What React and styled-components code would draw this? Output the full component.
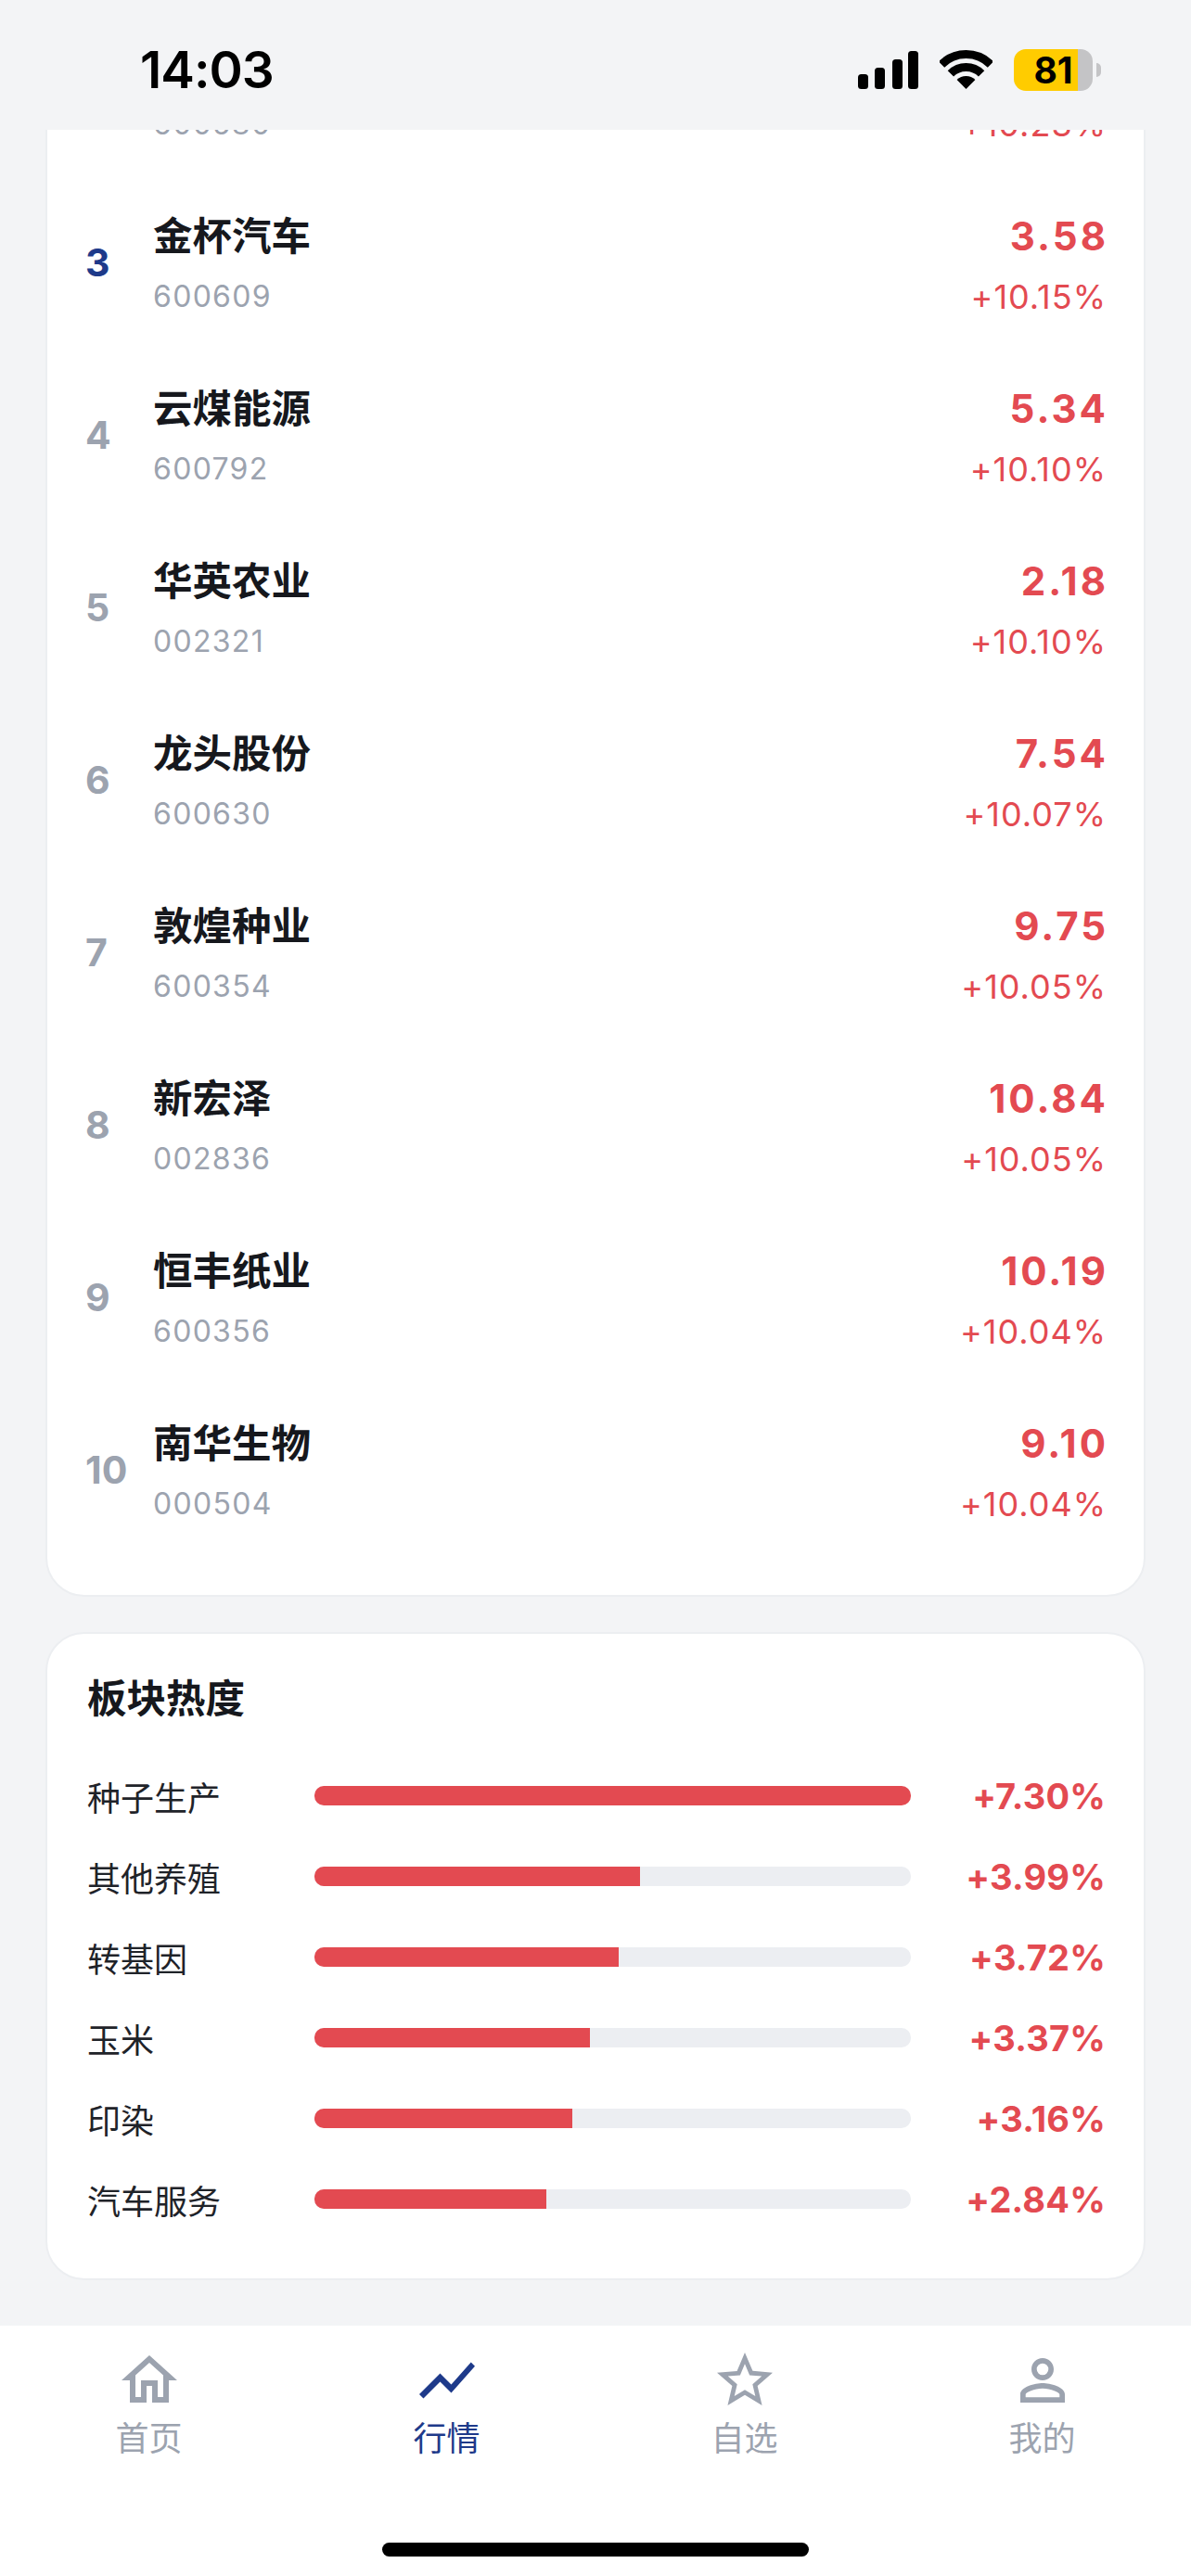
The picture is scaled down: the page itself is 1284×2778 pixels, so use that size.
import React from 'react';
import styled, { createGlobalStyle } from 'styled-components';
import { MdOutlineHome, MdShowChart, MdStarBorder, MdPersonOutline } from 'react-icons/md';

const GlobalStyle = createGlobalStyle`
  html, body {
    margin: 0;
    padding: 0;
    background: #f3f4f6;
  }
  * {
    box-sizing: border-box;
  }
`;

const Screen = styled.div`
  width: 1284px;
  height: 2778px;
  display: flex;
  flex-direction: column;
  overflow: hidden;
  background: #f3f4f6;
  font-family: Inter, "Noto Sans CJK SC", sans-serif;
`;

const StatusBar = styled.div`
  height: 140px;
  flex: none;
  display: flex;
  align-items: center;
  justify-content: space-between;
  padding: 10px 97px 0 151px;
`;

const Clock = styled.div`
  font-size: 55px;
  line-height: 66px;
  font-weight: 600;
  letter-spacing: -1px;
  color: #000;
`;

const StatusIcons = styled.div`
  display: flex;
  align-items: center;
  gap: 23px;
`;

const Battery = styled.div`
  display: flex;
  align-items: center;
  gap: 4px;
`;

const BatteryBody = styled.div`
  width: 85px;
  height: 45px;
  border-radius: 13px;
  background: linear-gradient(to right, #ffcc00 81%, #c4c4c6 81%);
  text-align: center;
  font-size: 39px;
  line-height: 45px;
  font-weight: 700;
  color: #000;
`;

const BatteryNub = styled.div`
  width: 5px;
  height: 15px;
  border-radius: 0 8px 8px 0;
  background: #c4c4c6;
`;

const Scroller = styled.div`
  flex: 1;
  min-height: 0;
  overflow: hidden;
  padding: 0 49px;
`;

const Card = styled.section`
  background: #fff;
  border: 2px solid #eceef1;
  border-radius: 42px;
`;

// the list is scrolled, so its top edge sits above the visible area
const StockCard = styled(Card)`
  margin-top: -138px;
  padding: 0 0 42px;
`;

const StockRow = styled.div`
  height: 186px;
  display: flex;
  align-items: center;
  padding: 0 41px;
`;

const Rank = styled.div`
  width: 73px;
  flex: none;
  font-size: 41px;
  font-weight: 700;
  color: ${(p) => (p.$top ? '#1e3a8a' : '#9ca3af')};
`;

const StockName = styled.div`
  flex: 1;
  display: flex;
  flex-direction: column;
  gap: 20px;
  padding-top: 3px;
`;

const NameText = styled.div`
  font-size: 42.5px;
  line-height: 50px;
  font-weight: 600;
  color: #16181d;
`;

const CodeText = styled.div`
  font-size: 32px;
  line-height: 40px;
  letter-spacing: 1.3px;
  color: #9ca3af;
`;

const StockPrice = styled.div`
  display: flex;
  flex-direction: column;
  align-items: flex-end;
  gap: 20px;
  padding-top: 3px;
`;

const PriceText = styled.div`
  margin-right: -3px;
  font-size: 42px;
  line-height: 50px;
  font-weight: 700;
  letter-spacing: 3px;
  color: #e34a51;
`;

const ChangeText = styled.div`
  margin-right: -1px;
  font-size: 36px;
  line-height: 40px;
  letter-spacing: 1px;
  color: #e34a51;
`;

const SectorCard = styled(Card)`
  margin-top: 38px;
  padding: 40px 43px 60px;
`;

const SectorTitle = styled.h2`
  margin: 0 0 49px;
  font-size: 42.5px;
  line-height: 60px;
  font-weight: 600;
  color: #16181d;
`;

const SectorList = styled.div`
  display: flex;
  flex-direction: column;
  gap: 36px;
`;

const SectorRow = styled.div`
  height: 51px;
  display: flex;
  align-items: center;
`;

const SectorName = styled.div`
  width: 245px;
  flex: none;
  font-size: 36px;
  color: #1f2329;
`;

const Track = styled.div`
  width: 643px;
  height: 21px;
  flex: none;
  border-radius: 10px;
  overflow: hidden;
  background: #eceef2;
`;

const Fill = styled.div`
  height: 100%;
  background: #e34a51;
`;

const SectorChange = styled.div`
  flex: 1;
  margin-right: -2px;
  text-align: right;
  font-size: 38px;
  font-weight: 700;
  letter-spacing: 0.2px;
  color: #e34a51;
`;

const TabBar = styled.nav`
  height: 270px;
  flex: none;
  background: #fff;
  display: flex;
  flex-direction: column;
  align-items: center;
`;

const Tabs = styled.div`
  width: 100%;
  display: grid;
  grid-template-columns: repeat(4, 1fr);
  padding-top: 23px;
`;

const Tab = styled.div`
  display: flex;
  flex-direction: column;
  align-items: center;
  font-size: 36px;
  line-height: 54px;
  color: ${(p) => (p.$active ? '#1e3a8a' : '#9ca3af')};
`;

const HomeBar = styled.div`
  width: 460px;
  height: 15px;
  margin-top: 85px;
  border-radius: 8px;
  background: #000;
`;

const stocks = [
  { rank: 2, name: '卧龙电驱', code: '600580', price: '19.12', change: '+10.23%' },
  { rank: 3, name: '金杯汽车', code: '600609', price: '3.58', change: '+10.15%' },
  { rank: 4, name: '云煤能源', code: '600792', price: '5.34', change: '+10.10%' },
  { rank: 5, name: '华英农业', code: '002321', price: '2.18', change: '+10.10%' },
  { rank: 6, name: '龙头股份', code: '600630', price: '7.54', change: '+10.07%' },
  { rank: 7, name: '敦煌种业', code: '600354', price: '9.75', change: '+10.05%' },
  { rank: 8, name: '新宏泽', code: '002836', price: '10.84', change: '+10.05%' },
  { rank: 9, name: '恒丰纸业', code: '600356', price: '10.19', change: '+10.04%' },
  { rank: 10, name: '南华生物', code: '000504', price: '9.10', change: '+10.04%' },
];

const sectors = [
  { name: '种子生产', change: 7.3 },
  { name: '其他养殖', change: 3.99 },
  { name: '转基因', change: 3.72 },
  { name: '玉米', change: 3.37 },
  { name: '印染', change: 3.16 },
  { name: '汽车服务', change: 2.84 },
];

const tabs = [
  { label: '首页', Icon: MdOutlineHome },
  { label: '行情', Icon: MdShowChart, active: true },
  { label: '自选', Icon: MdStarBorder },
  { label: '我的', Icon: MdPersonOutline },
];

function SignalIcon() {
  return (
    <svg width="65" height="41" viewBox="0 0 65 41" fill="#000">
      <rect x="0" y="25" width="11" height="16" rx="3.5" />
      <rect x="18" y="18" width="11" height="23" rx="3.5" />
      <rect x="37" y="9" width="11" height="32" rx="3.5" />
      <rect x="54" y="0" width="11" height="41" rx="3.5" />
    </svg>
  );
}

function WifiIcon() {
  return (
    <svg width="57" height="42" viewBox="0 0 57 42">
      <g fill="none" stroke="#000" strokeWidth="9">
        <path d="M2 15.5A37.5 37.5 0 0 1 55 15.5" />
        <path d="M11.9 25.4A23.5 23.5 0 0 1 45.1 25.4" />
      </g>
      <path d="M28.5 42L18.6 32.1A14 14 0 0 1 38.4 32.1Z" fill="#000" />
    </svg>
  );
}

function App() {
  return (
    <Screen>
      <GlobalStyle />
      <StatusBar>
        <Clock>14:03</Clock>
        <StatusIcons>
          <SignalIcon />
          <WifiIcon />
          <Battery>
            <BatteryBody>81</BatteryBody>
            <BatteryNub />
          </Battery>
        </StatusIcons>
      </StatusBar>
      <Scroller>
        <StockCard>
          {stocks.map((s) => (
            <StockRow key={s.rank}>
              <Rank $top={s.rank <= 3}>{s.rank}</Rank>
              <StockName>
                <NameText>{s.name}</NameText>
                <CodeText>{s.code}</CodeText>
              </StockName>
              <StockPrice>
                <PriceText>{s.price}</PriceText>
                <ChangeText>{s.change}</ChangeText>
              </StockPrice>
            </StockRow>
          ))}
        </StockCard>
        <SectorCard>
          <SectorTitle>板块热度</SectorTitle>
          <SectorList>
            {sectors.map((s) => (
              <SectorRow key={s.name}>
                <SectorName>{s.name}</SectorName>
                <Track>
                  <Fill style={{ width: `${(s.change / 7.3) * 100}%` }} />
                </Track>
                <SectorChange>+{s.change.toFixed(2)}%</SectorChange>
              </SectorRow>
            ))}
          </SectorList>
        </SectorCard>
      </Scroller>
      <TabBar>
        <Tabs>
          {tabs.map(({ label, Icon, active }) => (
            <Tab key={label} $active={active}>
              <Icon size={72} />
              {label}
            </Tab>
          ))}
        </Tabs>
        <HomeBar />
      </TabBar>
    </Screen>
  );
}

export default App;
